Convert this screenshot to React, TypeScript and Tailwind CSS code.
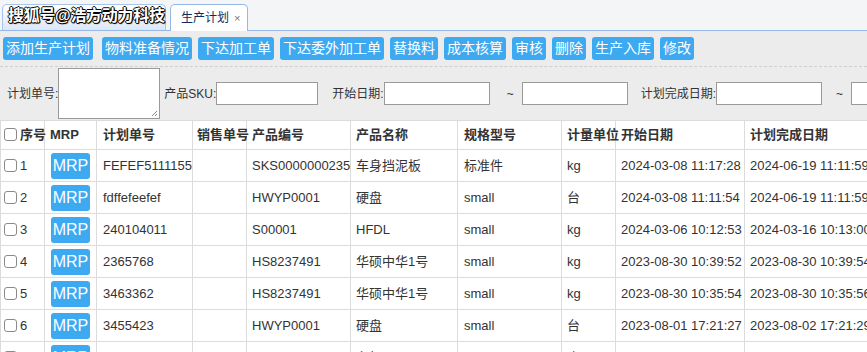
import React from "react";

type Row = {
  no: string;
  plan: string;
  sale: string;
  code: string;
  name: string;
  spec: string;
  unit: string;
  start: string;
  end: string;
};

const toolButtons = [
  "添加生产计划",
  "物料准备情况",
  "下达加工单",
  "下达委外加工单",
  "替换料",
  "成本核算",
  "审核",
  "删除",
  "生产入库",
  "修改",
];

const rows: Row[] = [
  { no: "1", plan: "FEFEF5111155", sale: "", code: "SKS0000000235", name: "车身挡泥板", spec: "标准件", unit: "kg", start: "2024-03-08 11:17:28", end: "2024-06-19 11:11:59" },
  { no: "2", plan: "fdffefeefef", sale: "", code: "HWYP0001", name: "硬盘", spec: "small", unit: "台", start: "2024-03-08 11:11:54", end: "2024-06-19 11:11:59" },
  { no: "3", plan: "240104011", sale: "", code: "S00001", name: "HFDL", spec: "small", unit: "kg", start: "2024-03-06 10:12:53", end: "2024-03-16 10:13:00" },
  { no: "4", plan: "2365768", sale: "", code: "HS8237491", name: "华硕中华1号", spec: "small", unit: "kg", start: "2023-08-30 10:39:52", end: "2023-08-30 10:39:54" },
  { no: "5", plan: "3463362", sale: "", code: "HS8237491", name: "华硕中华1号", spec: "small", unit: "kg", start: "2023-08-30 10:35:54", end: "2023-08-30 10:35:56" },
  { no: "6", plan: "3455423", sale: "", code: "HWYP0001", name: "硬盘", spec: "small", unit: "台", start: "2023-08-01 17:21:27", end: "2023-08-02 17:21:29" },
  { no: "7", plan: "111312", sale: "", code: "Sku-lk-T0001", name: "台架", spec: "small", unit: "个", start: "2023-03-23 11:05:05", end: "2023-03-25 11:05:05" },
];

const Check = () => (
  <span className="inline-block w-[13px] h-[13px] rounded-[3px] border border-[#8a8a8a] bg-white align-[-2px] mr-[3px]" />
);

const Input = ({ w }: { w: string }) => (
  <span className={`inline-block shrink-0 h-[23px] bg-white border border-[#9a9a9a] ${w}`} />
);

export default function App() {
  return (
    <div className="w-[867px] h-[352px] overflow-hidden bg-[#ececec] text-[#333] text-[13px] font-['Liberation_Sans','Noto_Sans_CJK_SC',sans-serif]">
      {/* tabs */}
      <div className="relative h-[31px] bg-[#f4f5f7] border-b border-[#95b8e7] flex items-end pl-[2px] gap-[4px]">
        <div className="w-[164px] h-[26px] rounded-t-[5px] border border-b-0 border-[#a8c4ea] bg-gradient-to-b from-white to-[#dbe7f8]" />
        <div className="w-[78px] h-[27px] -mb-px rounded-t-[5px] border border-b-0 border-[#95b8e7] bg-white flex items-center pl-[10px] text-[12px] text-[#0e2d5f]">
          生产计划<span className="ml-[5px] text-[11px] text-[#6b7a90]">×</span>
        </div>
        <div className="absolute left-[8px] top-[4px] text-[16px] font-bold leading-[24px] text-white tracking-[-0.3px] [text-shadow:_1px_0_0_#000,_-1px_0_0_#000,_0_1px_0_#000,_0_-1px_0_#000,_1px_1px_1px_#000]">
          搜狐号@浩方动力科技
        </div>
      </div>

      {/* toolbar */}
      <div className="h-[36px] pt-[6px] px-[3px] flex items-start gap-[6px] border-b border-dashed border-[#cfcfcf]">
        {toolButtons.map((b, i) => (
          <button
            key={b}
            className={`h-[23px] px-[3px] rounded-[3px] bg-[#3ca9f1] text-white text-[14px] leading-[23px] ${i === 0 ? "mr-[3px]" : ""}`}
          >
            {b}
          </button>
        ))}
      </div>

      {/* search */}
      <div className="h-[53px] flex items-center whitespace-nowrap text-[12px]">
        <span className="ml-[7px] shrink-0">计划单号:</span>
        <span className="inline-block shrink-0 w-[102px] h-[51px] bg-white border border-[#9a9a9a] relative">
          <svg className="absolute right-[1px] bottom-[1px]" width="8" height="8" viewBox="0 0 8 8">
            <path d="M7 2L2 7M7 5L5 7" stroke="#888" strokeWidth="1" />
          </svg>
        </span>
        <span className="ml-[4px] shrink-0">产品SKU:</span>
        <Input w="w-[102px]" />
        <span className="ml-[14px] shrink-0">开始日期:</span>
        <Input w="w-[106px]" />
        <span className="ml-[17px] mr-[8px] shrink-0">~</span>
        <Input w="w-[106px]" />
        <span className="ml-[13px] shrink-0">计划完成日期:</span>
        <Input w="w-[106px]" />
        <span className="ml-[14px] mr-[8px] shrink-0">~</span>
        <Input w="w-[106px]" />
      </div>

      {/* table */}
      <table className="table-fixed border-collapse bg-white w-[900px] border-t border-[#dcdcdc]">
        <colgroup>
          <col className="w-[44px]" />
          <col className="w-[52px]" />
          <col className="w-[96px]" />
          <col className="w-[54px]" />
          <col className="w-[104px]" />
          <col className="w-[107px]" />
          <col className="w-[104px]" />
          <col className="w-[54px]" />
          <col className="w-[129px]" />
          <col className="w-[156px]" />
        </colgroup>
        <thead>
          <tr className="h-[29px] font-bold text-left">
            <th className="border border-[#dcdcdc] pl-[3px] font-bold whitespace-nowrap"><Check />序号</th>
            <th className="border border-[#dcdcdc] pl-[5px] font-bold">MRP</th>
            <th className="border border-[#dcdcdc] pl-[6px] font-bold">计划单号</th>
            <th className="border border-[#dcdcdc] pl-[4px] font-bold whitespace-nowrap">销售单号</th>
            <th className="border border-[#dcdcdc] pl-[5px] font-bold">产品编号</th>
            <th className="border border-[#dcdcdc] pl-[5px] font-bold">产品名称</th>
            <th className="border border-[#dcdcdc] pl-[6px] font-bold">规格型号</th>
            <th className="border border-[#dcdcdc] pl-[5px] font-bold whitespace-nowrap">计量单位</th>
            <th className="border border-[#dcdcdc] pl-[5px] font-bold">开始日期</th>
            <th className="border border-[#dcdcdc] pl-[5px] font-bold">计划完成日期</th>
          </tr>
        </thead>
        <tbody>
          {rows.map((r) => (
            <tr key={r.no} className="h-[32px] whitespace-nowrap">
              <td className="border border-[#dcdcdc] pl-[3px]"><Check />{r.no}</td>
              <td className="border border-[#dcdcdc] pl-[6px]">
                <span className="inline-flex items-center justify-center w-[39px] h-[26px] rounded-[3px] bg-[#3ca9f1] text-white text-[16px]">
                  MRP
                </span>
              </td>
              <td className="border border-[#dcdcdc] pl-[6px]">{r.plan}</td>
              <td className="border border-[#dcdcdc] pl-[4px]">{r.sale}</td>
              <td className="border border-[#dcdcdc] pl-[5px]">{r.code}</td>
              <td className="border border-[#dcdcdc] pl-[5px]">{r.name}</td>
              <td className="border border-[#dcdcdc] pl-[6px]">{r.spec}</td>
              <td className="border border-[#dcdcdc] pl-[5px]">{r.unit}</td>
              <td className="border border-[#dcdcdc] pl-[5px] overflow-hidden">{r.start}</td>
              <td className="border border-[#dcdcdc] pl-[5px] overflow-hidden">{r.end}</td>
            </tr>
          ))}
        </tbody>
      </table>
    </div>
  );
}
